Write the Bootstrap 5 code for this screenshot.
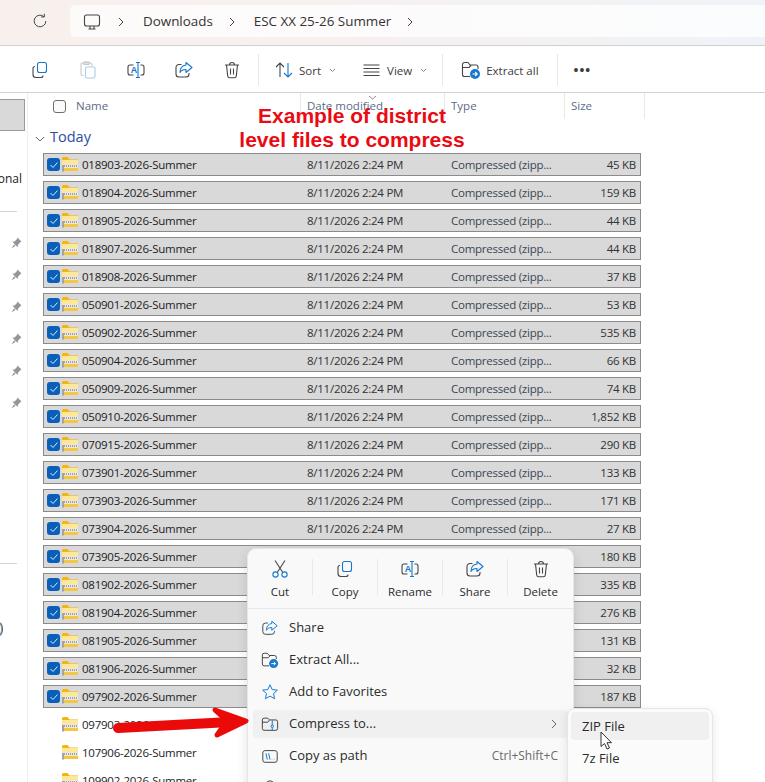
<!DOCTYPE html>
<html lang="en">
<head>
  <meta charset="UTF-8" />
  <meta name="viewport" content="width=device-width, initial-scale=1.0" />
  <title>Downloads - File Explorer</title>
  <link rel="stylesheet" href="https://cdn.jsdelivr.net/npm/bootstrap@5.3.0/dist/css/bootstrap.min.css" />
  <style>
    body {
      width: 765px;
      height: 782px;
      overflow: hidden;
      position: relative;
      background: #fff;
      font-family: "Open Sans", "Noto Sans", sans-serif;
      font-size: 12px;
      color: #1c1c1c;
    }
    svg { display: block; flex: none; overflow: visible; }
    .ico { width: 20px; height: 20px; fill: none; stroke: #454545; stroke-width: 1.1; }
    .s-blue { stroke: #1478cf; }
    .s-fill { fill: #1478cf; stroke: none; }
    .s-white { stroke: #fff; }
    .s-letter { fill: #1478cf; stroke: none; font-family: "Liberation Sans", sans-serif; font-size: 9px; font-weight: 700; }

    .addr-bar {
      height: 46px;
      padding: 5px 0 8px 31px;
      background: linear-gradient(90deg, #f8f0ed 0%, #f6f1f0 50%, #eff3f8 100%);
      border-bottom: 1px solid #d3cfd0;
    }
    .crumbs {
      flex: 1;
      margin-left: 21px;
      height: 32px;
      padding: 1px 0 0 12px;
      background: rgba(255, 255, 255, .72);
      border-radius: 5px 0 0 5px;
      font-size: 13.4px;
      color: #333;
    }
    .crumb-sep { width: 8px; height: 10px; margin: 0 18px 0 15px; fill: none; stroke: #444; stroke-width: 1; }

    .tool-bar {
      height: 47px;
      padding: 2px 0 0 16px;
      border-bottom: 1px solid #cdd3d9;
      color: #3c3c3c;
      font-size: 11.5px;
    }
    .tool-bar span { padding-top: 1px; }
    .tool-btn { width: 48px; display: flex; justify-content: center; }
    .tool-sep { width: 1px; height: 32px; background: #e8e8e8; }
    .caret-mini { width: 7px; height: 5px; fill: none; stroke: #8a8a8a; stroke-width: 1; }
    .tool-icon-gap { margin-right: 5px; }
    .tool-dots { font-size: 13px; font-weight: 700; line-height: 1; letter-spacing: 1px; }

    .body-wrap { height: 690px; }
    .side-pane {
      width: 28px;
      flex: none;
      border-right: 1px solid #efefef;
      overflow: hidden;
    }
    .side-active {
      width: 25px;
      height: 32px;
      margin-top: 6px;
      background: #d9d9d9;
      border: 1px solid #9a9a9a;
      border-left: 0;
    }
    .side-text {
      width: 22px;
      margin-top: 39px;
      height: 18px;
      line-height: 18px;
      direction: rtl;
      white-space: nowrap;
      overflow: hidden;
      text-align: left;
    }
    .side-line { width: 17px; height: 1px; background: #d5d5d5; }
    .pin-slot { height: 32px; padding-left: 11px; display: flex; align-items: center; }
    .pin-ico { width: 11px; height: 12px; fill: #8e979e; }
    .side-disc {
      width: 6px;
      height: 12px;
      margin: 59px 0 0 -4px;
      border: 1px solid #e08a20;
      border-radius: 50%;
      outline: 1px solid #1769c4;
    }

    .col-heads {
      height: 26px;
      position: relative;
      color: #5a6b85;
      font-size: 11.5px;
    }
    .col-cell { height: 26px; padding-left: 6px; border-right: 1px solid #e8e8e8; display: flex; align-items: center; }
    .head-name { width: 273px; padding-left: 25px; }
    .head-date { width: 144px; }
    .head-type { width: 120px; }
    .head-size { width: 80px; }
    .head-box { width: 13px; height: 13px; margin-right: 10px; border: 1px solid #6f6f6f; border-radius: 3px; background: #fafafa; }
    .sort-caret { position: absolute; left: 340px; top: 2px; width: 9px; height: 5px; fill: none; stroke: #8a8a8a; stroke-width: 1; }

    .group-head { height: 34px; padding: 9px 0 0 7px; color: #2d4ba0; font-size: 14.5px; }
    .group-caret { width: 10px; height: 6px; margin-right: 5px; fill: none; stroke: #6c6c6c; stroke-width: 1; }

    .file-list { padding-left: 15px; }
    .file-row {
      width: 598px;
      height: 23px;
      margin-bottom: 5px;
      padding-left: 3px;
      border: 1px solid transparent;
      font-size: 11.5px;
      letter-spacing: -.25px;
      white-space: nowrap;
    }
    .file-row.is-picked { background: #d9d9d9; border-color: #8b8b8b; }
    .tick-box {
      width: 13px;
      height: 13px;
      margin-right: 2px;
      border-radius: 3px;
      display: flex;
      align-items: center;
      justify-content: center;
    }
    .is-picked .tick-box { background: #0a5fb8; }
    .tick-box svg { width: 8px; height: 6px; fill: none; stroke: #dbe9f7; stroke-width: 1; }
    .zip-ico { width: 16px; height: 15px; margin-right: 4px; }
    .cell-name { width: 225px; }
    .cell-date { width: 144px; color: #333; }
    .cell-type { width: 116px; color: #3a4654; }
    .cell-size { width: 69px; text-align: right; color: #333; }

    .note-text {
      position: absolute;
      left: 200px;
      top: 104px;
      width: 304px;
      text-align: center;
      font-family: "Liberation Sans", Arial, sans-serif;
      font-weight: 700;
      font-size: 21px;
      line-height: 24px;
      color: #ea0a12;
      z-index: 5;
    }
    .note-arrow { position: absolute; left: 105px; top: 700px; width: 150px; height: 45px; z-index: 8; }

    .ctx-menu {
      position: absolute;
      left: 247px;
      top: 548px;
      width: 327px;
      height: 260px;
      background: #f9f9f9;
      border: 1px solid #e6e6e6;
      border-radius: 9px;
      box-shadow: 0 4px 12px rgba(0, 0, 0, .12);
      font-size: 13px;
      color: #2b2b2b;
      z-index: 6;
    }
    .ctx-top { height: 60px; padding-top: 10px; border-bottom: 1px solid #e7e7e7; font-size: 11.5px; }
    .ctx-act { width: 65px; height: 36px; border-right: 1px solid #e9e9e9; }
    .ctx-act:last-child { border-right: 0; }
    .ctx-act span { line-height: 14px; margin-top: 6px; }
    .ctx-items { padding: 5px 5px 0; }
    .ctx-item { height: 28px; margin-bottom: 4px; padding-left: 8px; border-radius: 4px; }
    .ctx-item.is-hover { background: #f0f0f0; }
    .ctx-item .ico { width: 18px; height: 18px; margin-right: 10px; }
    .ctx-hint { margin-left: auto; padding-right: 10px; color: #6a6a6a; font-size: 12px; }
    .ctx-next { margin-left: auto; margin-right: 11px; width: 6px; height: 10px; fill: none; stroke: #666; stroke-width: 1; }

    .sub-menu {
      position: absolute;
      left: 567px;
      top: 708px;
      width: 146px;
      height: 110px;
      padding: 3px;
      background: #fbfbfb;
      border: 1px solid #e6e6e6;
      border-radius: 8px;
      box-shadow: 0 3px 10px rgba(0, 0, 0, .1);
      font-size: 13px;
      color: #2b2b2b;
      z-index: 7;
    }
    .sub-item { height: 28px; margin-bottom: 4px; padding: 1px 0 0 11px; border-radius: 4px; }
    .sub-item.is-hover { background: #f0f0f0; }
    .mouse-ptr { position: absolute; left: 600px; top: 731px; width: 13px; height: 20px; z-index: 9; }
  </style>
</head>
<body>
  <svg width="0" height="0" class="position-absolute">
    <defs>
      <symbol id="i-copy" viewBox="0 0 20 20">
        <rect class="s-blue" x="7.500" y="2.500" width="9" height="10" rx="2"/>
        <path d="M5 6.500a2 2 0 0 0-2 2v6a3 3 0 0 0 3 3h5a2 2 0 0 0 2-2"/>
      </symbol>
      <symbol id="i-rename" viewBox="0 0 20 20">
        <path d="M7.500 5H4a2 2 0 0 0-2 2v6a2 2 0 0 0 2 2h3.500M14.500 5H16a2 2 0 0 1 2 2v6a2 2 0 0 1-2 2h-1.500"/>
        <path class="s-blue" d="M10 2.500h4M10 17.500h4M12 2.500v15"/>
        <text class="s-letter" x="4.800" y="13.300">A</text>
      </symbol>
      <symbol id="i-share" viewBox="0 0 20 20">
        <path d="M7.500 4.500H5a3 3 0 0 0-3 3v6.500a3 3 0 0 0 3 3h7a3 3 0 0 0 3-3v-1"/>
        <path class="s-blue" stroke-linejoin="round" d="M12 2.500l6 5-6 5v-3c-3 0-5 1-6 3 0-4 2-7 6-7.500z"/>
      </symbol>
      <symbol id="i-trash" viewBox="0 0 20 20">
        <path d="M3 5h14M7.500 5c0-1.500 1-2.500 2.500-2.500s2.500 1 2.500 2.500M4.500 5l1.200 11a2 2 0 0 0 2 1.800h4.600a2 2 0 0 0 2-1.800L15.500 5M8.500 8.500v6M11.500 8.500v6"/>
      </symbol>
      <symbol id="i-cut" viewBox="0 0 20 20">
        <path d="M5 1.500l7.500 11.500M15 1.500L7.500 13"/>
        <circle class="s-blue" cx="5.500" cy="15.500" r="2.600"/>
        <circle class="s-blue" cx="14.500" cy="15.500" r="2.600"/>
      </symbol>
      <symbol id="i-extract" viewBox="0 0 20 20">
        <path d="M9 16.500H3.500a2 2 0 0 1-2-2v-10a2 2 0 0 1 2-2h3.500l2 2.500h6a2 2 0 0 1 2 2v2M1.500 7.500H8l2-2"/>
        <circle class="s-fill" cx="14" cy="14" r="5"/>
        <path class="s-white" d="M11.500 14h4.500M14.200 12l2 2-2 2"/>
      </symbol>
      <symbol id="i-star" viewBox="0 0 20 20">
        <path class="s-blue" stroke-linejoin="round" d="M10 2l2.400 5.300 5.800.6-4.300 3.900 1.200 5.700-5.100-2.900-5.100 2.900 1.200-5.700L1.800 7.900l5.800-.6z"/>
      </symbol>
      <symbol id="i-zipfolder" viewBox="0 0 20 20">
        <path d="M3.500 3.500h4l2 2h7a2 2 0 0 1 2 2v7.500a2 2 0 0 1-2 2h-13a2 2 0 0 1-2-2v-9.500a2 2 0 0 1 2-2zM1.500 8h6l2-2.500"/>
        <path class="s-blue" d="M12.500 6v5M12.500 14v3"/>
        <circle class="s-blue" cx="12.500" cy="12.500" r="1.400"/>
      </symbol>
      <symbol id="i-path" viewBox="0 0 20 20">
        <rect x="2" y="4" width="16" height="13" rx="2.500"/>
        <path class="s-blue" d="M5.500 7l1.500 7M8.500 7l1.500 7M12 13.500h.5M14.500 13.500h.5"/>
      </symbol>
      <symbol id="i-zip" viewBox="0 0 16 15">
        <path d="M0 1.500A1.500 1.500 0 0 1 1.500 0h4L7.500 2.500H16V14H0z" fill="#f6b40e"/>
        <rect x="0" y="3" width="16" height="11" fill="#fde79b"/>
        <rect x="1.500" y="7" width="14.500" height="4" fill="#ece8d8"/>
        <path d="M2 9h14" stroke="#8a8a8a" stroke-width="1.400" stroke-dasharray="1 1"/>
        <rect x="0" y="11" width="16" height="3" fill="#f3c644"/>
        <rect x="0" y="8" width="2" height="6.500" fill="#a3a3a3"/>
      </symbol>
      <symbol id="i-pin" viewBox="0 0 12 13">
        <path d="M7 .5l4.500 4.500-1.500.7-2.500 3L7.200 11 1.500 5.200l2.300-.3 2.600-2.600z"/>
        <path d="M3.300 8L.5 12.500 5 9.600z"/>
      </symbol>
    </defs>
  </svg>

  <div class="addr-bar d-flex align-items-center">
    <svg class="ico" viewBox="0 0 20 20" style="width:18px;height:18px"><path d="M16.500 10a6.500 6.500 0 1 1-2-4.700M14.800 2v3.500h-3.500"/></svg>
    <div class="crumbs d-flex align-items-center">
      <svg class="ico" viewBox="0 0 20 20"><rect x="2.500" y="3" width="15" height="11" rx="2"/><path d="M8 14v2.500M12 14v2.500M6.500 17h7"/></svg>
      <svg class="crumb-sep" viewBox="0 0 8 10"><path d="M2 1l4 4-4 4"/></svg>
      <span>Downloads</span>
      <svg class="crumb-sep" viewBox="0 0 8 10"><path d="M2 1l4 4-4 4"/></svg>
      <span>ESC XX 25-26 Summer</span>
      <svg class="crumb-sep" viewBox="0 0 8 10"><path d="M2 1l4 4-4 4"/></svg>
    </div>
  </div>

  <div class="tool-bar d-flex align-items-center">
    <div class="tool-btn"><svg class="ico"><use href="#i-copy"/></svg></div>
    <div class="tool-btn">
      <svg class="ico" viewBox="0 0 20 20" style="stroke:#c9c9c9"><path d="M5.500 15.500h-1a1.500 1.500 0 0 1-1.500-1.500V4.500A1.500 1.500 0 0 1 4.500 3h8a1.500 1.500 0 0 1 1.500 1.500V6M6 2h5v2.500H6z"/><rect x="7.500" y="7" width="9.500" height="11" rx="1.500" style="stroke:#a9cdea"/></svg>
    </div>
    <div class="tool-btn"><svg class="ico"><use href="#i-rename"/></svg></div>
    <div class="tool-btn"><svg class="ico"><use href="#i-share"/></svg></div>
    <div class="tool-btn"><svg class="ico"><use href="#i-trash"/></svg></div>
    <div class="tool-sep" style="margin:0 15px 0 2px"></div>
    <svg class="ico tool-icon-gap" viewBox="0 0 20 20"><path d="M6 17V3M2 7l4-4 4 4"/><path class="s-blue" d="M14 3v14M10 13l4 4 4-4"/></svg>
    <span>Sort</span>
    <svg class="caret-mini ms-2" viewBox="0 0 7 5"><path d="M1 1l2.500 2.500L6 1"/></svg>
    <svg class="ico tool-icon-gap" viewBox="0 0 20 20" style="margin-left:26px"><path d="M1.500 5h16M1.500 8.500h16M1.500 12h16M1.500 15.500h16"/></svg>
    <span>View</span>
    <svg class="caret-mini ms-2" viewBox="0 0 7 5"><path d="M1 1l2.500 2.500L6 1"/></svg>
    <div class="tool-sep" style="margin:0 18px 0 15px"></div>
    <svg class="ico tool-icon-gap"><use href="#i-extract"/></svg>
    <span>Extract all</span>
    <div class="tool-sep" style="margin:0 16px 0 18px"></div>
    <span class="tool-dots">•••</span>
  </div>

  <div class="body-wrap d-flex">
    <div class="side-pane">
      <div class="side-active"></div>
      <div class="side-text">Personal</div>
      <div class="side-line" style="margin-top:23px"></div>
      <div id="pins" style="margin-top:15px"></div>
      <div class="side-line" style="margin-top:144px"></div>
      <div class="side-disc"></div>
    </div>
    <div class="flex-grow-1">
      <div class="col-heads d-flex">
        <div class="col-cell head-name"><span class="head-box"></span>Name</div>
        <div class="col-cell head-date">Date modified</div>
        <div class="col-cell head-type">Type</div>
        <div class="col-cell head-size">Size</div>
        <svg class="sort-caret" viewBox="0 0 9 5"><path d="M1 1l3.500 3L8 1"/></svg>
      </div>
      <div class="group-head d-flex align-items-start">
        <svg class="group-caret mt-2" viewBox="0 0 10 6"><path d="M1 1l4 4 4-4"/></svg>
        <span class="lh-sm">Today</span>
      </div>
      <div class="file-list" id="file-list"></div>
    </div>
  </div>

  <div class="note-text">Example of district<br />level files to compress</div>

  <svg class="note-arrow" viewBox="0 0 150 45">
    <path d="M13 28L125 22" stroke="#ea0a0a" stroke-width="10" stroke-linecap="round"/>
    <path d="M110 10L141 21L112 35L122 21z" fill="#ea0a0a" stroke="#ea0a0a" stroke-width="5" stroke-linejoin="round"/>
  </svg>

  <div class="ctx-menu">
    <div class="ctx-top d-flex">
      <div class="ctx-act d-flex flex-column align-items-center"><svg class="ico"><use href="#i-cut"/></svg><span>Cut</span></div>
      <div class="ctx-act d-flex flex-column align-items-center"><svg class="ico"><use href="#i-copy"/></svg><span>Copy</span></div>
      <div class="ctx-act d-flex flex-column align-items-center"><svg class="ico"><use href="#i-rename"/></svg><span>Rename</span></div>
      <div class="ctx-act d-flex flex-column align-items-center"><svg class="ico"><use href="#i-share"/></svg><span>Share</span></div>
      <div class="ctx-act d-flex flex-column align-items-center"><svg class="ico"><use href="#i-trash"/></svg><span>Delete</span></div>
    </div>
    <div class="ctx-items">
      <div class="ctx-item d-flex align-items-center"><svg class="ico"><use href="#i-share"/></svg>Share</div>
      <div class="ctx-item d-flex align-items-center"><svg class="ico"><use href="#i-extract"/></svg>Extract All...</div>
      <div class="ctx-item d-flex align-items-center"><svg class="ico"><use href="#i-star"/></svg>Add to Favorites</div>
      <div class="ctx-item is-hover d-flex align-items-center"><svg class="ico"><use href="#i-zipfolder"/></svg>Compress to...
        <svg class="ctx-next" viewBox="0 0 6 10"><path d="M1 1l4 4-4 4"/></svg>
      </div>
      <div class="ctx-item d-flex align-items-center"><svg class="ico"><use href="#i-path"/></svg>Copy as path<span class="ctx-hint">Ctrl+Shift+C</span></div>
      <div class="ctx-item d-flex align-items-center"><svg class="ico" viewBox="0 0 20 20"><circle cx="10" cy="6" r="4"/></svg></div>
    </div>
  </div>

  <div class="sub-menu">
    <div class="sub-item is-hover d-flex align-items-center">ZIP File</div>
    <div class="sub-item d-flex align-items-center">7z File</div>
  </div>
  <svg class="mouse-ptr" viewBox="0 0 13 20"><path d="M1 1v14.500l3.500-3 2.500 5.500 2.500-1-2.500-5.300h4.500z" fill="#fff" stroke="#333" stroke-width="1" stroke-linejoin="round"/></svg>

  <script>
    const files = [
      ["018903", "45"], ["018904", "159"], ["018905", "44"], ["018907", "44"], ["018908", "37"],
      ["050901", "53"], ["050902", "535"], ["050904", "66"], ["050909", "74"], ["050910", "1,852"],
      ["070915", "290"], ["073901", "133"], ["073903", "171"], ["073904", "27"], ["073905", "180"],
      ["081902", "335"], ["081904", "276"], ["081905", "131"], ["081906", "32"], ["097902", "187"],
      ["097903", ""], ["107906", ""], ["109902", ""]
    ];
    const rowsAboveMenu = 14;

    const list = document.getElementById("file-list");
    files.forEach(([code, size], i) => {
      const showDetails = i < rowsAboveMenu;
      const row = document.createElement("div");
      row.className = "file-row d-flex align-items-center" + (size ? " is-picked" : "");
      row.innerHTML = `
        <span class="tick-box">${size ? '<svg viewBox="0 0 8 6"><path d="M.5 3l2.500 2.500L7.500.5"/></svg>' : ""}</span>
        <svg class="zip-ico"><use href="#i-zip"/></svg>
        <span class="cell-name">${code}-2026-Summer</span>
        <span class="cell-date">${showDetails ? "8/11/2026 2:24 PM" : ""}</span>
        <span class="cell-type">${showDetails ? "Compressed (zipp..." : ""}</span>
        <span class="cell-size">${size ? size + " KB" : ""}</span>`;
      list.appendChild(row);
    });

    const pins = document.getElementById("pins");
    for (let i = 0; i < 6; i++) {
      pins.innerHTML += '<div class="pin-slot"><svg class="pin-ico"><use href="#i-pin"/></svg></div>';
    }
  </script>
  <script src="https://cdn.jsdelivr.net/npm/bootstrap@5.3.0/dist/js/bootstrap.bundle.min.js"></script>
</body>
</html>
